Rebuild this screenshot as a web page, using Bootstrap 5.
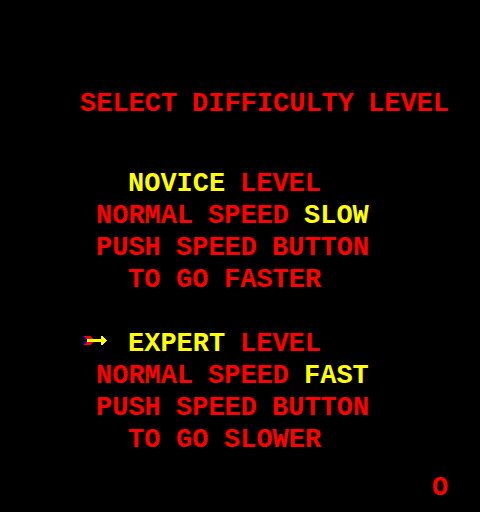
<!DOCTYPE html>
<html lang="en">
<head>
<meta charset="utf-8">
<meta name="viewport" content="width=device-width, initial-scale=1">
<title>Select Difficulty Level</title>
<link href="https://cdn.jsdelivr.net/npm/bootstrap@5.3.0/dist/css/bootstrap.min.css" rel="stylesheet">
<style>
  body {
    background: #000;
    color: #f00;
    font: bold 27px/32px "Liberation Mono", "Courier New", monospace;
  }
  .screen { padding: 88px 0 8px; }
  /* Each line of the screen is thirty character cells wide. */
  .line {
    display: grid;
    grid-template-columns: repeat(30, minmax(0, 1fr));
    font: inherit;
    margin: 0;
    white-space: nowrap;
  }
  .line > * { grid-row: 1; }
  .at-5 { grid-column-start: 6; }
  .at-6 { grid-column-start: 7; }
  .at-8 { grid-column-start: 9; }
  .at-11 { grid-column-start: 12; }
  .at-12 { grid-column-start: 13; }
  .at-13 { grid-column-start: 14; }
  .at-14 { grid-column-start: 15; }
  .at-15 { grid-column-start: 16; }
  .at-17 { grid-column-start: 18; }
  .at-19 { grid-column-start: 20; }
  .at-23 { grid-column-start: 24; }
  .at-27 { grid-column-start: 28; }
  .hot { color: #ff0; }
  .title-gap { margin-bottom: 48px; }
  .level-gap { margin-bottom: 32px; }
  .arrow { width: 32px; height: 32px; }
</style>
</head>
<body>
<main class="screen d-flex flex-column min-vh-100">
  <h1 class="line title-gap"><span class="at-5">SELECT</span> <span class="at-12">DIFFICULTY</span> <span class="at-23">LEVEL</span></h1>

  <section class="level-gap">
    <h2 class="line"><span class="at-8 hot">NOVICE</span> <span class="at-15">LEVEL</span></h2>
    <p class="line"><span class="at-6">NORMAL</span> <span class="at-13">SPEED</span> <span class="at-19 hot">SLOW</span></p>
    <p class="line"><span class="at-6">PUSH</span> <span class="at-11">SPEED</span> <span class="at-17">BUTTON</span></p>
    <p class="line"><span class="at-8">TO</span> <span class="at-11">GO</span> <span class="at-14">FASTER</span></p>
  </section>

  <section>
    <h2 class="line">
      <svg class="arrow at-5" viewBox="0 0 32 32" shape-rendering="crispEdges" aria-label="Selected" role="img">
        <path fill="#f00" d="M4 8h7v1h1v1h1v5h-1v1h-1v1H4v-1h2v-2h1v-3H6V9H4z"/>
        <path fill="#00f" d="M3 8h1v1h2v2h1v3H6v2H4v1H3v-1h1v-1h1v-2h1v-1H5v-2H4V9H3z"/>
        <path fill="#ff0" d="M7 11h14V8h2v1h1v1h1v1h1v1h1v1h-1v1h-1v1h-1v1h-1v1h-2v-3H7z"/>
      </svg>
      <span class="at-8 hot">EXPERT</span> <span class="at-15">LEVEL</span></h2>
    <p class="line"><span class="at-6">NORMAL</span> <span class="at-13">SPEED</span> <span class="at-19 hot">FAST</span></p>
    <p class="line"><span class="at-6">PUSH</span> <span class="at-11">SPEED</span> <span class="at-17">BUTTON</span></p>
    <p class="line"><span class="at-8">TO</span> <span class="at-11">GO</span> <span class="at-14">SLOWER</span></p>
  </section>

  <footer class="line mt-auto"><span class="at-27">O</span></footer>
</main>
<script src="https://cdn.jsdelivr.net/npm/bootstrap@5.3.0/dist/js/bootstrap.bundle.min.js"></script>
</body>
</html>
